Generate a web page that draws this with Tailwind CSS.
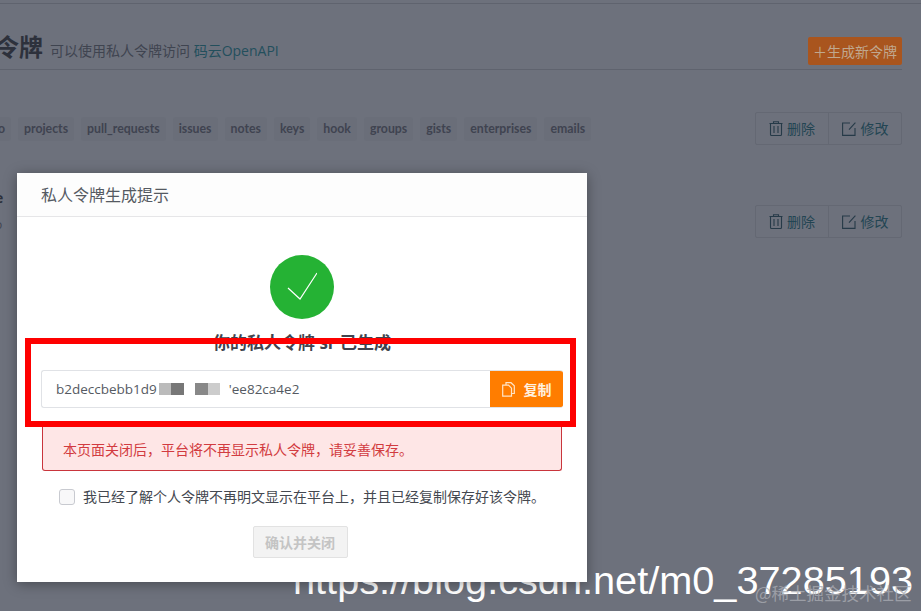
<!DOCTYPE html>
<html lang="zh-CN">
  <head>
    <meta charset="UTF-8" />
    <title>私人令牌</title>
    <script src="https://cdn.jsdelivr.net/npm/@tailwindcss/browser@4"></script>
  </head>
  <body class="bg-[#6d717c] font-['Open_Sans','Noto_Sans_CJK_SC',sans-serif] overflow-hidden">
    <div class="relative w-[921px] h-[611px] overflow-hidden">
      <!-- dimmed page behind the dialog -->
      <div class="h-[4px] border-b border-[#5f636e]"></div>
      <div class="ml-[-5px] mr-[19px]">
        <div class="flex items-end justify-between h-[66px] pb-[4px] border-b border-[#5f636e]">
          <div class="flex items-baseline gap-[7px]">
            <span class="text-[24px] font-bold text-[#2d313c]">令牌</span>
            <span class="text-[14px] text-[#3f4450]">可以使用私人令牌访问 <span class="text-[#234f5c]">码云OpenAPI</span></span>
          </div>
          <span class="flex items-center justify-center w-[94px] h-[28px] rounded-[2px] bg-[#a9551e] text-[14px] text-[#c0a88f]">＋生成新令牌</span>
        </div>
        <div class="flex items-center justify-between mt-[42px] h-[33px]">
          <div class="flex gap-[7px] mt-[1px] font-['Lato','Noto_Sans_CJK_SC',sans-serif] text-[12.3px] font-bold text-[#3f4350] ml-[-14px]">
            <span class="px-[6px] py-[3px] rounded-[3px] bg-[#6a6e79] w-[30px] text-right">o</span>
            <span class="px-[6px] py-[3px] rounded-[3px] bg-[#6a6e79]">projects</span>
            <span class="px-[6px] py-[3px] rounded-[3px] bg-[#6a6e79]">pull_requests</span>
            <span class="px-[6px] py-[3px] rounded-[3px] bg-[#6a6e79]">issues</span>
            <span class="px-[6px] py-[3px] rounded-[3px] bg-[#6a6e79]">notes</span>
            <span class="px-[6px] py-[3px] rounded-[3px] bg-[#6a6e79]">keys</span>
            <span class="px-[6px] py-[3px] rounded-[3px] bg-[#6a6e79]">hook</span>
            <span class="px-[6px] py-[3px] rounded-[3px] bg-[#6a6e79]">groups</span>
            <span class="px-[6px] py-[3px] rounded-[3px] bg-[#6a6e79]">gists</span>
            <span class="px-[6px] py-[3px] rounded-[3px] bg-[#6a6e79]">enterprises</span>
            <span class="px-[6px] py-[3px] rounded-[3px] bg-[#6a6e79]">emails</span>
          </div>
          <div class="flex h-[33px] border border-[#646873] rounded-[2px] text-[14px] text-[#234553]">
            <span class="flex items-center justify-center gap-[4px] w-[73px] border-r border-[#646873]">
              <svg class="w-[14px] h-[15px]" viewBox="0 0 14 15" fill="none" stroke="#263a48" stroke-width="1.1"><path d="M0.5 2.5h13M4.5 2.5V0.8h5v1.7M1.5 2.5v11a1 1 0 0 0 1 1h9a1 1 0 0 0 1-1v-11M5 5v7M9 5v7"/></svg>
              删除
            </span>
            <span class="flex items-center justify-center gap-[5px] w-[72px]">
              <svg class="w-[14px] h-[14px]" viewBox="0 0 14 14" fill="none" stroke="#263a48" stroke-width="1.1"><path d="M8 1H0.6v12.4h12.4V6M13.4 0.6L7 7.6"/></svg>
              修改
            </span>
          </div>
        </div>
        <div class="flex justify-end mt-[60px]">
          <div class="flex h-[33px] border border-[#646873] rounded-[2px] text-[14px] text-[#234553]">
            <span class="flex items-center justify-center gap-[4px] w-[73px] border-r border-[#646873]">
              <svg class="w-[14px] h-[15px]" viewBox="0 0 14 15" fill="none" stroke="#263a48" stroke-width="1.1"><path d="M0.5 2.5h13M4.5 2.5V0.8h5v1.7M1.5 2.5v11a1 1 0 0 0 1 1h9a1 1 0 0 0 1-1v-11M5 5v7M9 5v7"/></svg>
              删除
            </span>
            <span class="flex items-center justify-center gap-[5px] w-[72px]">
              <svg class="w-[14px] h-[14px]" viewBox="0 0 14 14" fill="none" stroke="#263a48" stroke-width="1.1"><path d="M8 1H0.6v12.4h12.4V6M13.4 0.6L7 7.6"/></svg>
              修改
            </span>
          </div>
        </div>
      </div>
      <span class="absolute left-[-5px] top-[187px] text-[14px] font-bold text-[#2d313c]">e</span>
      <span class="absolute left-[-5px] top-[216px] text-[12px] text-[#3f4450]">o</span>

      <!-- pasted watermark, sits under the dialog -->
      <div class="absolute left-[293px] top-[555px] font-['Liberation_Sans',sans-serif] text-[39.7px] leading-[50px] text-white whitespace-nowrap">https://blog.csdn.net/m0_37285193</div>
      <div class="absolute left-[755px] top-[583px] font-['Noto_Sans_CJK_SC',sans-serif] text-[17.5px] leading-[20px] text-[#a9abb2]/80 whitespace-nowrap">@稀土掘金技术社区</div>

      <!-- dialog -->
      <div class="absolute left-[17px] top-[173px] w-[570px] h-[409px] bg-white shadow-[0_2px_12px_rgba(0,0,0,0.35)]">
        <div class="flex items-center h-[44px] px-[24px] border-b border-[#e6e6e8] bg-[#fdfdfd] text-[16px] text-[#555a62]">私人令牌生成提示</div>
        <div class="flex flex-col items-center pt-[38px]">
          <div class="flex items-center justify-center w-[64px] h-[64px] rounded-full bg-[#25b234]">
            <svg class="w-[30px] h-[30px]" viewBox="0 0 30 30" fill="none" stroke="white" stroke-width="1.2"><path d="M1 16L13 27 30 1"/></svg>
          </div>
          <div class="mt-[12px] h-[26px] text-[17px] leading-[24px] font-bold text-[#40444e]">你的私人令牌 sr 已生成</div>
          <div class="flex mt-[13px] w-[522px] h-[38px] border border-r-0 border-[#e0e2e6] rounded-[3px] overflow-hidden">
            <div class="flex flex-1 items-center pl-[14px] text-[13.5px] text-[#555a62] overflow-hidden">
              <span>b2deccbebb1d9</span>
              <span class="w-[25px] shrink-0 ml-[2px] flex h-[12px]"><i class="w-[12px] bg-[#bbbbbb]"></i><i class="w-[13px] bg-[#777777]"></i></span>
              <span class="w-[11px] shrink-0"></span>
              <span class="flex shrink-0 h-[12px]"><i class="w-[13px] bg-[#888888]"></i><i class="w-[12px] bg-[#cccccc]"></i></span>
              <span class="w-[9px] shrink-0"></span>
              <span>'ee82ca4e2</span>
            </div>
            <button class="flex items-center justify-center gap-[9px] w-[73px] bg-[#ff7d00] text-[14px] font-bold text-[#fff1e0]">
              <svg class="w-[13px] h-[15px]" viewBox="0 0 13 15" fill="none" stroke="#ffe4c6" stroke-width="1.2"><path d="M4 3V0.7h5l3.3 3V11.5H9.5M0.7 3.2H6.5l3 3v8H0.7z"/></svg>
              复制
            </button>
          </div>
          <div class="flex items-center mt-[18px] w-[520px] h-[45px] pl-[20px] pt-[2px] border border-[#c9353c] border-t-0 rounded-b-[3px] bg-[#fee6e6] text-[14px] text-[#d23b40]">本页面关闭后，平台将不再显示私人令牌，请妥善保存。</div>
          <label class="flex items-center self-start ml-[42px] mt-[15px] gap-[8px] text-[14px] text-[#444850] whitespace-nowrap">
            <span class="w-[16px] h-[16px] rounded-[3px] border border-[#c8cad0] bg-[#f8f8f9]"></span>
            我已经了解个人令牌不再明文显示在平台上，并且已经复制保存好该令牌。
          </label>
          <button class="mt-[19px] ml-[-4px] w-[95px] h-[32px] border border-[#e2e2e2] rounded-[2px] bg-[#f3f3f3] text-[14px] font-bold text-[#c4c4c4]">确认并关闭</button>
        </div>
      </div>

      <!-- red annotation box drawn on the screenshot -->
      <div class="absolute left-[25px] top-[338px] w-[551px] h-[89px] border-[6px] border-[#fe0000]"></div>
    </div>
  </body>
</html>
